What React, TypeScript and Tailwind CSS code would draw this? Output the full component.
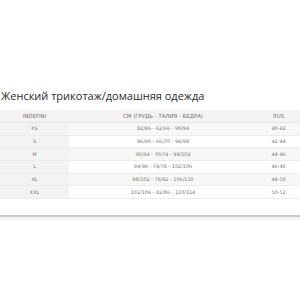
const rows = [
  { size: "XS", cm: "82/86 - 62/66 - 90/94", rus: "40-42" },
  { size: "S", cm: "86/90 - 66/70 - 94/98", rus: "42-44" },
  { size: "M", cm: "90/94 - 70/74 - 98/102", rus: "44-46" },
  { size: "L", cm: "94/98 - 74/78 - 102/106", rus: "46-48" },
  { size: "XL", cm: "98/102 - 78/82 - 106/110", rus: "48-50" },
  { size: "XXL", cm: "102/106 - 82/86 - 110/114", rus: "50-52" },
];

export default function App() {
  return (
    <div className="w-[300px] h-[300px] bg-white overflow-hidden font-['DejaVu_Sans',sans-serif]">
      <div className="h-[88px]" />
      <h1 className="pl-[1px] text-[11px] leading-[15px] text-[#2b2b2b] font-['Open_Sans',sans-serif] whitespace-nowrap">
        Женский трикотаж/домашняя одежда
      </h1>
      <div className="h-[7px]" />

      {/* size table */}
      <div className="w-[300px] text-[4.9px] text-[#737373] uppercase">
        <div className="grid grid-cols-[69px_188px_43px] h-[13px] items-center bg-[#f3f3f3] border-b border-[#e6e6e6] text-[5.4px]">
          <div className="text-center">Indefini</div>
          <div className="text-center">CM (грудь - талия - бедра)</div>
          <div className="text-center">RUS</div>
        </div>
        {rows.map((r, i) => (
          <div
            key={r.size}
            className={`grid grid-cols-[69px_188px_43px] h-[12.7px] border-b border-[#ececec] ${
              i % 2 === 0 ? "bg-[#f7f7f7]" : "bg-white"
            }`}
          >
            <div className="flex items-center justify-center bg-[#f3f3f3]">{r.size}</div>
            <div className="flex items-center justify-center">{r.cm}</div>
            <div className="flex items-center justify-center">{r.rus}</div>
          </div>
        ))}
      </div>

      <div className="h-[16px]" />
      <div className="h-[2px] bg-[#cacaca]" />
      <div className="h-[3px] bg-[#f2f2f2]" />
    </div>
  );
}
